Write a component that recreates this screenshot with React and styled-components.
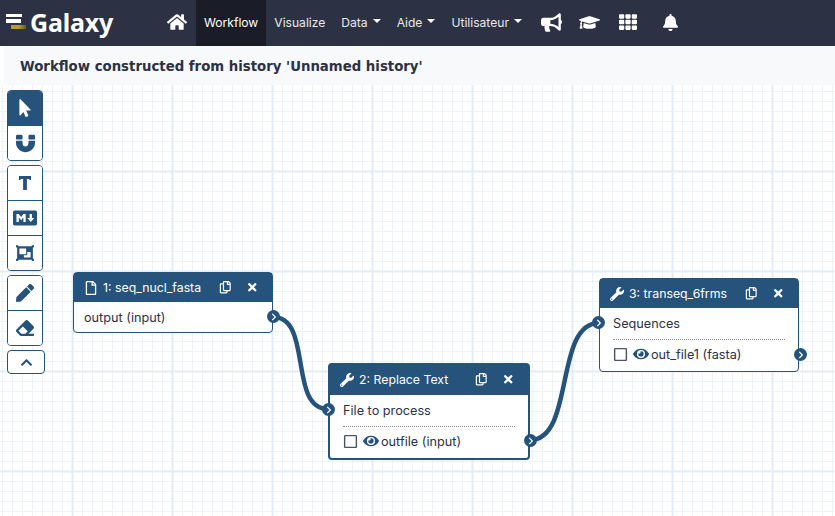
import styled, { createGlobalStyle } from 'styled-components';
import {
  FaBell, FaBullhorn, FaChevronRight, FaChevronUp, FaEraser, FaEye, FaGraduationCap, FaHome, FaMagnet,
  FaMarkdown, FaMousePointer, FaObjectGroup, FaPen, FaRegCopy, FaRegFile, FaRegSquare, FaTh, FaTimes, FaWrench,
} from 'react-icons/fa';

const navy = '#25537b';
const ink = '#2c3143';

const GlobalStyle = createGlobalStyle`
  html, body { margin: 0; height: 100%; background: #fff; overflow: hidden; }
  #root { height: 100%; }
  body { font-family: Inter, "Liberation Sans", sans-serif; font-size: 12.7px; color: ${ink}; }
`;

const Page = styled.div`
  display: flex;
  flex-direction: column;
  height: 516px;
`;

const Navbar = styled.nav`
  display: flex;
  align-items: stretch;
  height: 46px;
  flex: none;
  background: ${ink};
  color: #fff;
`;

const Brand = styled.div`
  display: flex;
  align-items: center;
  gap: 4px;
  width: 158px;
  padding-left: 6px;
  box-sizing: border-box;
  font-family: "Noto Sans", sans-serif;
  font-weight: 700;
  font-size: 25px;
  letter-spacing: -0.2px;
`;

const BrandName = styled.span`
  padding-bottom: 3px;
`;

const NavIcon = styled.a`
  display: flex;
  align-items: center;
  justify-content: center;
  width: ${(p) => p.$width}px;
  margin-left: ${(p) => p.$offset || 0}px;
  padding-bottom: 2px;
  font-size: ${(p) => p.$size}px;
  color: #fff;
`;

const NavLink = styled.a`
  display: flex;
  align-items: center;
  padding: 0 8px 2px;
  font-size: 12.1px;
  color: ${(p) => (p.$active ? '#fff' : '#e8e9ed')};
  background: ${(p) => (p.$active ? '#1a1d28' : 'transparent')};

  ${(p) => p.$caret && `
    &::after {
      content: '';
      margin-left: 5px;
      margin-bottom: 3px;
      border-top: 4px solid #fff;
      border-left: 4px solid transparent;
      border-right: 4px solid transparent;
    }
  `}
`;

const TitleBar = styled.div`
  flex: none;
  height: 39px;
  margin-left: 4px;
  padding: 1px 16px 0;
  box-sizing: border-box;
  display: flex;
  align-items: center;
  background: #f8f9fa;
  font-family: "DejaVu Sans", sans-serif;
  font-weight: 700;
  font-size: 13.3px;
`;

const Canvas = styled.div`
  position: relative;
  flex: 1;
  overflow: hidden;
  padding: 5px 7px;
  box-sizing: border-box;
  background-color: #fff;
  background-image:
    linear-gradient(90deg, #e2ecf7 2px, transparent 2px),
    linear-gradient(#e2ecf7 2px, transparent 2px),
    linear-gradient(90deg, #eef3f9 1px, transparent 1px),
    linear-gradient(#eef3f9 1px, transparent 1px);
  background-size: 100px 100px, 100px 100px, 10px 10px, 10px 10px;
  background-position: 71.5px 0, 0 85.5px, 2px 0, 0 6px;
`;

const Tools = styled.div`
  position: relative;
  z-index: 3;
  display: flex;
  flex-direction: column;
  align-items: flex-start;
  gap: 4px;
`;

const ToolGroup = styled.div`
  display: flex;
  flex-direction: column;
  width: 36px;
  box-sizing: border-box;
  border: 1px solid ${navy};
  border-radius: 4px;
  overflow: hidden;
  background: #fff;
`;

const Tool = styled.button`
  display: flex;
  align-items: center;
  justify-content: center;
  height: ${(p) => (p.$first ? 34 : 35)}px;
  padding: 0;
  border: 0;
  border-top: ${(p) => (p.$first ? '0' : `1px solid ${navy}`)};
  font-size: ${(p) => p.$size || 18}px;
  color: ${(p) => (p.$active ? '#fff' : navy)};
  background: ${(p) => (p.$active ? navy : '#fff')};
`;

const Collapse = styled.button`
  display: flex;
  align-items: center;
  justify-content: center;
  width: 38px;
  height: 24px;
  padding: 0;
  border: 1px solid ${navy};
  border-radius: 4px;
  font-size: 13px;
  color: ${navy};
  background: #fff;
`;

const Wires = styled.svg`
  position: absolute;
  inset: 0;
  width: 100%;
  height: 100%;
  z-index: 1;
`;

const Node = styled.div`
  position: absolute;
  z-index: 2;
  left: ${(p) => p.$x}px;
  top: ${(p) => p.$y}px;
  width: ${(p) => (p.$selected ? 202 : 200)}px;
  box-sizing: border-box;
  border: ${(p) => (p.$selected ? 2 : 1)}px solid ${navy};
  border-radius: 4px;
  background: #fff;
`;

const NodeHead = styled.div`
  display: flex;
  align-items: center;
  box-sizing: border-box;
  height: ${(p) => (p.$selected ? 30 : 29)}px;
  padding: 0 10px ${(p) => (p.$selected ? 1 : 0)}px;
  background: ${navy};
  color: #fff;
  font-size: 12.3px;
`;

const NodeName = styled.span`
  flex: 1;
  display: flex;
  align-items: center;
  gap: 5px;
  white-space: nowrap;

  svg { font-size: 14px; }
`;

const HeadActions = styled.span`
  display: flex;
  align-items: center;
  gap: 14px;
  font-size: 12.5px;
  padding-right: 4px;
`;

const NodeBody = styled.div`
  padding: 6px 10px 0;
`;

const InputRow = styled.div`
  height: 18px;
  line-height: 18px;
  padding-top: 1px;
  padding-bottom: ${(p) => (p.$plain ? 5 : 6)}px;
  margin-left: ${(p) => (p.$plain ? 0 : 3)}px;
`;

const Divider = styled.div`
  margin: 0 3px 5px 3px;
  border-top: 1px dotted #8a8f9c;
`;

const OutputRow = styled.div`
  display: flex;
  align-items: center;
  height: 18px;
  margin: 0 3px 8px 3px;
  gap: 5px;
`;

const Check = styled.span`
  display: flex;
  font-size: 15px;
  color: #4a5468;
`;

const Eye = styled.span`
  display: flex;
  font-size: 16px;
  color: ${navy};
  margin-right: -3px;
`;

const Port = styled.span`
  position: absolute;
  z-index: 3;
  display: flex;
  align-items: center;
  justify-content: center;
  width: 13px;
  height: 13px;
  border-radius: 50%;
  background: ${navy};
  color: #fff;
  font-size: 8px;
  left: ${(p) => p.$x}px;
  top: ${(p) => p.$y}px;
`;

const Logo = () => (
  <svg width="20" height="18" viewBox="0 0 20 18">
    <defs>
      <linearGradient id="logoFade">
        <stop offset="0.5" stopColor="#b5a020" />
        <stop offset="1" stopColor="#5e5a36" />
      </linearGradient>
    </defs>
    <rect x="0" y="0" width="16" height="3" fill="#fff" />
    <rect x="0" y="5" width="15" height="4" fill="#fff" />
    <rect x="5" y="11" width="15" height="4" fill="url(#logoFade)" />
  </svg>
);

const TextTool = () => (
  <svg width="12" height="14" viewBox="0 0 12 14" fill="currentColor">
    <path d="M0 0H12V4H10.4V3H7.9V14H4.1V3H1.6V4H0Z" />
  </svg>
);

const App = () => (
  <Page>
    <GlobalStyle />
    <Navbar>
      <Brand><Logo /><BrandName>Galaxy</BrandName></Brand>
      <NavIcon $width={38} $size={20}><FaHome /></NavIcon>
      <NavLink $active>Workflow</NavLink>
      <NavLink>Visualize</NavLink>
      <NavLink $caret>Data</NavLink>
      <NavLink $caret>Aide</NavLink>
      <NavLink $caret>Utilisateur</NavLink>
      <NavIcon $width={38} $size={21} $offset={3}><FaBullhorn /></NavIcon>
      <NavIcon $width={38} $size={21}><FaGraduationCap /></NavIcon>
      <NavIcon $width={38} $size={18}><FaTh /></NavIcon>
      <NavIcon $width={48} $size={17}><FaBell /></NavIcon>
    </Navbar>
    <TitleBar>Workflow constructed from history 'Unnamed history'</TitleBar>
    <Canvas>
      <Tools>
        <ToolGroup>
          <Tool $first $active><FaMousePointer /></Tool>
          <Tool $size={19}><FaMagnet /></Tool>
        </ToolGroup>
        <ToolGroup>
          <Tool $first><TextTool /></Tool>
          <Tool $size={24}><FaMarkdown /></Tool>
          <Tool><FaObjectGroup /></Tool>
        </ToolGroup>
        <ToolGroup>
          <Tool $first><FaPen /></Tool>
          <Tool><FaEraser /></Tool>
        </ToolGroup>
        <Collapse><FaChevronUp /></Collapse>
      </Tools>

      <Wires>
        <path d="M273 232 C313 232 288 324 328 324" fill="none" stroke={navy} strokeWidth="4.5" />
        <path d="M530 355 C575 355 554 238 599 238" fill="none" stroke={navy} strokeWidth="4.5" />
      </Wires>

      <Node $x={73} $y={187}>
        <NodeHead>
          <NodeName><FaRegFile />1: seq_nucl_fasta</NodeName>
          <HeadActions><FaRegCopy /><FaTimes /></HeadActions>
        </NodeHead>
        <NodeBody>
          <InputRow $plain>output (input)</InputRow>
        </NodeBody>
      </Node>
      <Port $x={267} $y={225}><FaChevronRight /></Port>

      <Node $x={328} $y={278} $selected>
        <NodeHead $selected>
          <NodeName><FaWrench />2: Replace Text</NodeName>
          <HeadActions><FaRegCopy /><FaTimes /></HeadActions>
        </NodeHead>
        <NodeBody>
          <InputRow>File to process</InputRow>
          <Divider />
          <OutputRow>
            <Check><FaRegSquare /></Check>
            <Eye><FaEye /></Eye>
            outfile (input)
          </OutputRow>
        </NodeBody>
      </Node>
      <Port $x={322} $y={318}><FaChevronRight /></Port>
      <Port $x={524} $y={349}><FaChevronRight /></Port>

      <Node $x={599} $y={193}>
        <NodeHead>
          <NodeName><FaWrench />3: transeq_6frms</NodeName>
          <HeadActions><FaRegCopy /><FaTimes /></HeadActions>
        </NodeHead>
        <NodeBody>
          <InputRow>Sequences</InputRow>
          <Divider />
          <OutputRow>
            <Check><FaRegSquare /></Check>
            <Eye><FaEye /></Eye>
            out_file1 (fasta)
          </OutputRow>
        </NodeBody>
      </Node>
      <Port $x={592} $y={231}><FaChevronRight /></Port>
      <Port $x={794} $y={263}><FaChevronRight /></Port>
    </Canvas>
  </Page>
);

export default App;
